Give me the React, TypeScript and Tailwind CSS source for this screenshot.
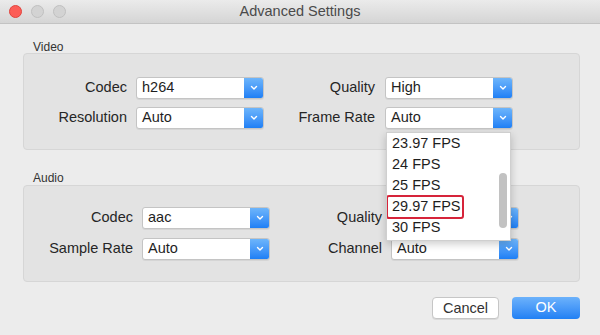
import React from 'react';

const font = { fontFamily: '"Liberation Sans", Arial, sans-serif' };

const Select: React.FC<{ value: string }> = ({ value }) => (
  <div className="flex h-[22px] w-[128px] rounded-[3px] border border-[#c4c4c4] bg-white shadow-[0_1px_0_rgba(0,0,0,0.06)] overflow-hidden">
    <div className="flex-1 flex items-center pl-[5px] text-[14.5px] text-[#1e1e1e]">{value}</div>
    <div className="w-[19px] h-full flex items-center justify-center bg-gradient-to-b from-[#6db5fb] to-[#1d7ff5]">
      <svg width="8" height="6" viewBox="0 0 8 6">
        <path d="M1.5 1.5 L4 4 L6.5 1.5" fill="none" stroke="white" strokeWidth="1.4" strokeLinecap="round" strokeLinejoin="round" />
      </svg>
    </div>
  </div>
);

const Label: React.FC<{ w: string; children: React.ReactNode }> = ({ w, children }) => (
  <div className={`${w} text-right text-[14.5px] text-[#262626]`}>{children}</div>
);

const App: React.FC = () => {
  return (
    <div className="relative w-[600px] h-[335px] bg-[#ececec] overflow-hidden" style={font}>
      {/* title bar */}
      <div className="relative h-[24px] flex items-center justify-center bg-gradient-to-b from-[#ebebeb] to-[#d5d5d5] border-b border-[#c3c3c3]">
        <div className="absolute left-[9px] top-[5px] flex gap-[9px]">
          <div className="w-[13px] h-[13px] rounded-full bg-[#fc5d57] border border-[#e0443e]"></div>
          <div className="w-[13px] h-[13px] rounded-full bg-[#d3d3d3] border border-[#c0c0c0]"></div>
          <div className="w-[13px] h-[13px] rounded-full bg-[#d3d3d3] border border-[#c0c0c0]"></div>
        </div>
        <span className="text-[14.5px] text-[#4a4a4a]">Advanced Settings</span>
      </div>

      <div className="pl-[23px] pr-[20px]">
        {/* Video */}
        <div className="pl-[10px] pt-[14px] h-[29px] text-[12px] text-[#333]">Video</div>
        <div className="h-[97px] rounded-[4px] border border-[#d6d6d6] bg-[#e3e3e3] pt-[23px] flex flex-col gap-[8px]">
          <div className="flex items-center">
            <Label w="w-[103px]">Codec</Label>
            <div className="ml-[9px]"><Select value="h264" /></div>
            <Label w="w-[111px]">Quality</Label>
            <div className="ml-[10px]"><Select value="High" /></div>
          </div>
          <div className="flex items-center">
            <Label w="w-[103px]">Resolution</Label>
            <div className="ml-[9px]"><Select value="Auto" /></div>
            <Label w="w-[111px]">Frame Rate</Label>
            <div className="ml-[10px]"><Select value="Auto" /></div>
          </div>
        </div>

        {/* Audio */}
        <div className="pl-[10px] pt-[19px] h-[35px] text-[12px] text-[#333]">Audio</div>
        <div className="h-[97px] rounded-[4px] border border-[#d6d6d6] bg-[#e3e3e3] pt-[21px] flex flex-col gap-[9px]">
          <div className="flex items-center">
            <Label w="w-[109px]">Codec</Label>
            <div className="ml-[9px]"><Select value="aac" /></div>
            <Label w="w-[112px]">Quality</Label>
            <div className="ml-[9px]"><Select value="High" /></div>
          </div>
          <div className="flex items-center">
            <Label w="w-[109px]">Sample Rate</Label>
            <div className="ml-[9px]"><Select value="Auto" /></div>
            <Label w="w-[112px]">Channel</Label>
            <div className="ml-[9px]"><Select value="Auto" /></div>
          </div>
        </div>

        {/* buttons */}
        <div className="flex justify-end gap-[13px] pt-[15px]">
          <button className="w-[67px] h-[22px] rounded-[4px] border border-[#c6c6c6] bg-white text-[14.5px] text-[#333] shadow-[0_1px_0_rgba(0,0,0,0.08)]">Cancel</button>
          <button className="w-[68px] h-[22px] rounded-[4px] bg-gradient-to-b from-[#6cb2fb] to-[#1f80f4] text-[14.5px] text-white">OK</button>
        </div>
      </div>

      {/* open Frame Rate menu */}
      <div className="absolute left-[386px] top-[132px] w-[125px] h-[109px] bg-white border border-[#cfcfcf] shadow-[0_3px_8px_rgba(0,0,0,0.2)] overflow-hidden">
        <div className="flex flex-col text-[14.5px] text-[#1e1e1e]">
          {['23.97 FPS', '24 FPS', '25 FPS', '29.97 FPS', '30 FPS'].map((f) => (
            <div key={f} className="h-[21px] flex items-center pl-[5px]">{f}</div>
          ))}
        </div>
        <div className="absolute left-[-1px] top-[62px] w-[78px] h-[24px] rounded-[3px] border-2 border-[#d6243a]"></div>
        <div className="absolute left-[112px] top-[40px] w-[8px] h-[55px] rounded-full bg-[#c2c2c2]"></div>
      </div>
    </div>
  );
};

export default App;
